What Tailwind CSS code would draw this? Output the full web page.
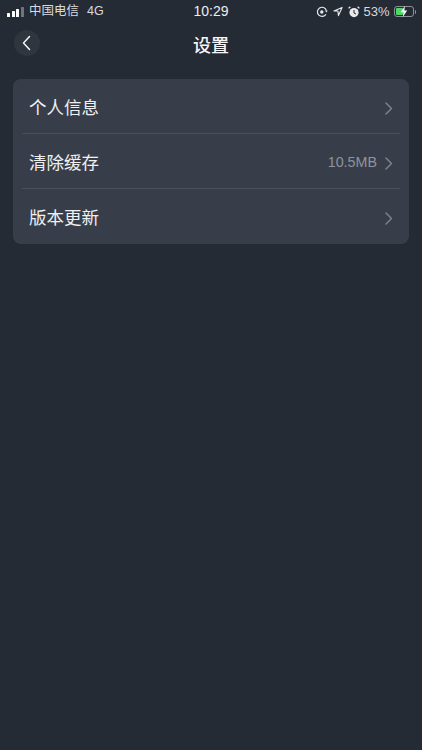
<!DOCTYPE html>
<html lang="zh">
<head>
  <meta charset="UTF-8" />
  <meta name="viewport" content="width=device-width, initial-scale=1.0"/>
  <title>设置</title>
  <script src="https://cdn.jsdelivr.net/npm/@tailwindcss/browser@4"></script>
</head>
<body class="bg-[#252b35] w-[422px] h-[750px] overflow-hidden text-white font-['Liberation_Sans','Noto_Sans_CJK_SC',sans-serif]">
  <!-- status bar -->
  <div class="h-[23px] relative flex items-center justify-between pl-[7px] pr-[6px]">
    <div class="flex items-center">
      <div class="flex items-end gap-[1.5px] h-[10px] w-[17px]">
        <span class="w-[3px] h-[4px] bg-white rounded-[0.5px]"></span>
        <span class="w-[3px] h-[6px] bg-white rounded-[0.5px]"></span>
        <span class="w-[3px] h-[8px] bg-white rounded-[0.5px]"></span>
        <span class="w-[3px] h-[10px] bg-white/35 rounded-[0.5px]"></span>
      </div>
      <span class="ml-[5px] text-[12.5px] text-[#d8dade]">中国电信</span>
      <span class="ml-[8px] text-[12.5px] text-[#d8dade]">4G</span>
    </div>
    <div class="absolute left-0 right-0 text-center text-[14px] font-medium text-[#eceef0]">10:29</div>
    <div class="flex items-center">
      <svg width="12" height="12" viewBox="0 0 12 12" fill="none" stroke="#e8e9eb" stroke-width="1.2"><path d="M10 8.2A4.6 4.6 0 1 1 10.4 4.4"/><path d="M11.6 4.6H8.8L10.6 6.6Z" fill="#e8e9eb" stroke="none"/><circle cx="5.8" cy="6" r="1.7" fill="#e8e9eb" stroke="none"/></svg>
      <svg class="ml-[5px]" width="10" height="11" viewBox="0 0 11 11" fill="none" stroke="#e8e9eb" stroke-width="1.2" stroke-linejoin="round"><path d="M10 1 1 5h4.4L6 10Z"/></svg>
      <svg class="ml-[5px]" width="12" height="12" viewBox="0 0 12 12" fill="#e8e9eb"><circle cx="6" cy="6.6" r="4.6"/><path d="M0.8 3 3 0.9 1.6 0.5 0.4 1.6ZM11.2 3 9 0.9 10.4 0.5 11.6 1.6Z"/><path d="M6 4v3l2 1" stroke="#252b35" fill="none"/></svg>
      <span class="ml-[3px] text-[13px] text-[#d8dade]">53%</span>
      <div class="ml-[4px] flex items-center">
        <div class="relative w-[20px] h-[11px] rounded-[3px] border border-[#8d9096] p-[1px]">
          <div class="w-[7px] h-full bg-[#4cd964] rounded-[1px]"></div>
          <svg class="absolute left-[5px] top-[-1px]" width="8" height="11" viewBox="0 0 8 11" fill="#fff"><path d="M4.8 0 .8 6.2h2.6L2.8 11l4.4-6.6H4.4Z"/></svg>
        </div>
        <span class="ml-[1px] w-[1.5px] h-[4px] bg-[#8d9096] rounded-r-[1px]"></span>
      </div>
    </div>
  </div>

  <!-- nav -->
  <div class="h-[43px] relative flex items-center justify-center">
    <div class="absolute left-[14px] top-[7px] w-[26px] h-[26px] rounded-full bg-[#2f3640] flex items-center justify-center">
      <svg width="12" height="16" viewBox="0 0 12 16" fill="none" stroke="#f4f5f6" stroke-width="1.5" stroke-linecap="round" stroke-linejoin="round"><path d="M8.5 1.5 2.5 8l6 6.5"/></svg>
    </div>
    <h1 class="pt-[3px] text-[18px] font-medium text-[#f4f5f6]">设置</h1>
  </div>

  <!-- list -->
  <div class="mx-[13px] mt-[13px] rounded-[8px] bg-[#383e49] px-[9px]">
    <div class="h-[55px] flex items-center justify-between pt-[4px] pl-[7px] pr-[7px] border-b border-[#4a505a]">
      <span class="text-[17.5px] text-[#eef0f2]">个人信息</span>
      <svg width="8" height="13" viewBox="0 0 8 13" fill="none" stroke="#7c818c" stroke-width="1.5" stroke-linecap="round" stroke-linejoin="round"><path d="M1 1l5.5 5.5L1 12"/></svg>
    </div>
    <div class="h-[55px] flex items-center justify-between pt-[4px] pl-[7px] pr-[7px] border-b border-[#4a505a]">
      <span class="text-[17.5px] text-[#eef0f2]">清除缓存</span>
      <div class="flex items-center gap-[8px]">
        <span class="text-[14.3px] text-[#8f939b]">10.5MB</span>
        <svg width="8" height="13" viewBox="0 0 8 13" fill="none" stroke="#7c818c" stroke-width="1.5" stroke-linecap="round" stroke-linejoin="round"><path d="M1 1l5.5 5.5L1 12"/></svg>
      </div>
    </div>
    <div class="h-[55px] flex items-center justify-between pt-[4px] pl-[7px] pr-[7px]">
      <span class="text-[17.5px] text-[#eef0f2]">版本更新</span>
      <svg width="8" height="13" viewBox="0 0 8 13" fill="none" stroke="#7c818c" stroke-width="1.5" stroke-linecap="round" stroke-linejoin="round"><path d="M1 1l5.5 5.5L1 12"/></svg>
    </div>
  </div>
</body>
</html>
